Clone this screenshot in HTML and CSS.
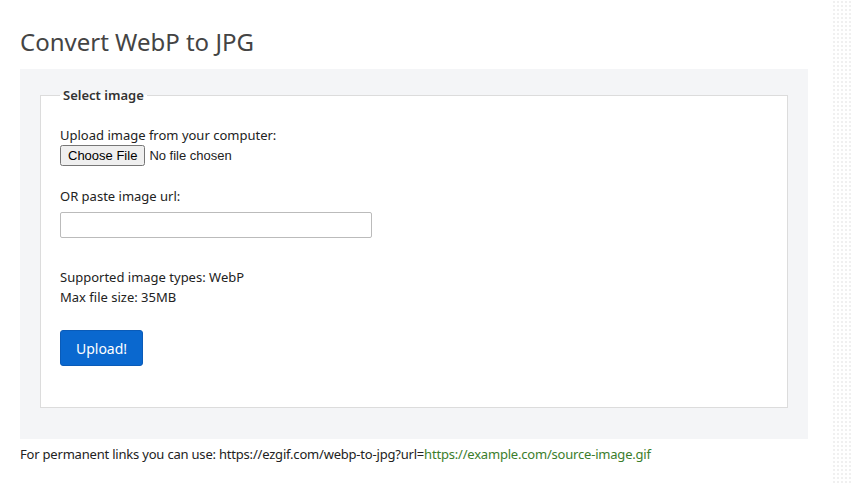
FILE: index.html
```html
<!DOCTYPE html>
<html lang="en">
<head>
  <meta charset="UTF-8">
  <title>Convert WebP to JPG</title>
  <link rel="stylesheet" href="styles.css">
</head>
<body>
  <div class="page">
    <h1>Convert WebP to JPG</h1>
    <div class="panel">
      <form class="upload-form">
        <fieldset>
          <legend>Select image</legend>
          <p class="field">
            Upload image from your computer:<br>
            <input type="file" class="file-input">
          </p>
          <p class="field">
            OR paste image url:<br>
            <input type="text" class="url-input">
          </p>
          <p class="info">
            Supported image types: WebP<br>
            Max file size: 35MB
          </p>
          <button type="button" class="btn-upload">Upload!</button>
        </fieldset>
      </form>
    </div>
    <p class="permalink">For permanent links you can use: https://ezgif.com/webp-to-jpg?url=<span class="link">https://example.com/source-image.gif</span></p>
  </div>
  <div class="side-dots"></div>
</body>
</html>
```

FILE: styles.css
```css
body {
  margin: 0;
  font-family: 'Noto Sans', 'Open Sans', Arial, sans-serif;
  font-size: 13px;
  color: #222;
  background-color: #fff;
  display: flex;
}
.page {
  width: 788px;
  padding: 0 0 0 20px;
}
h1 {
  font-weight: 400;
  font-size: 24px;
  color: #444;
  margin: 26px 0 11px 0;
  line-height: 32px;
}
/* Grey box around the form */
.panel {
  background-color: #f4f5f7;
  padding: 17px 20px 31px 20px;
}
.upload-form {
  margin: 0;
}
fieldset {
  margin: 0;
  background-color: #fff;
  border: 1px solid #dcdcdc;
  padding: 21px 19px 41px 19px;
}
legend {
  font-weight: 600;
  color: #333;
  padding: 0 3px;
}
.field {
  margin: 0 0 20px 0;
  line-height: 20px;
}
.file-input {
  font-family: Arial, sans-serif;
  font-size: 13px;
  margin: 0;
}
.url-input {
  width: 312px;
  height: 26px;
  box-sizing: border-box;
  border: 1px solid #bbb;
  border-radius: 2px;
  margin-top: 6px;
}
.info {
  margin: 29px 0 23px 0;
  line-height: 20px;
}
.btn-upload {
  display: block;
  background-color: #0a68cf;
  color: #fff;
  border: 1px solid #0a5bb8;
  border-radius: 3px;
  font-family: inherit;
  font-size: 14px;
  width: 83px;
  height: 36px;
  cursor: pointer;
}
.permalink {
  margin: 6px 0 0 0;
  font-size: 13px;
  letter-spacing: -0.2px;
  color: #222;
}
.link {
  color: #3b7d2c;
}
/* Faint dotted strip at the right edge */
.side-dots {
  margin-left: auto;
  width: 21px;
  height: 485px;
  background-image: radial-gradient(#f0f0f0 1px, transparent 1px);
  background-size: 4px 4px;
}
```
